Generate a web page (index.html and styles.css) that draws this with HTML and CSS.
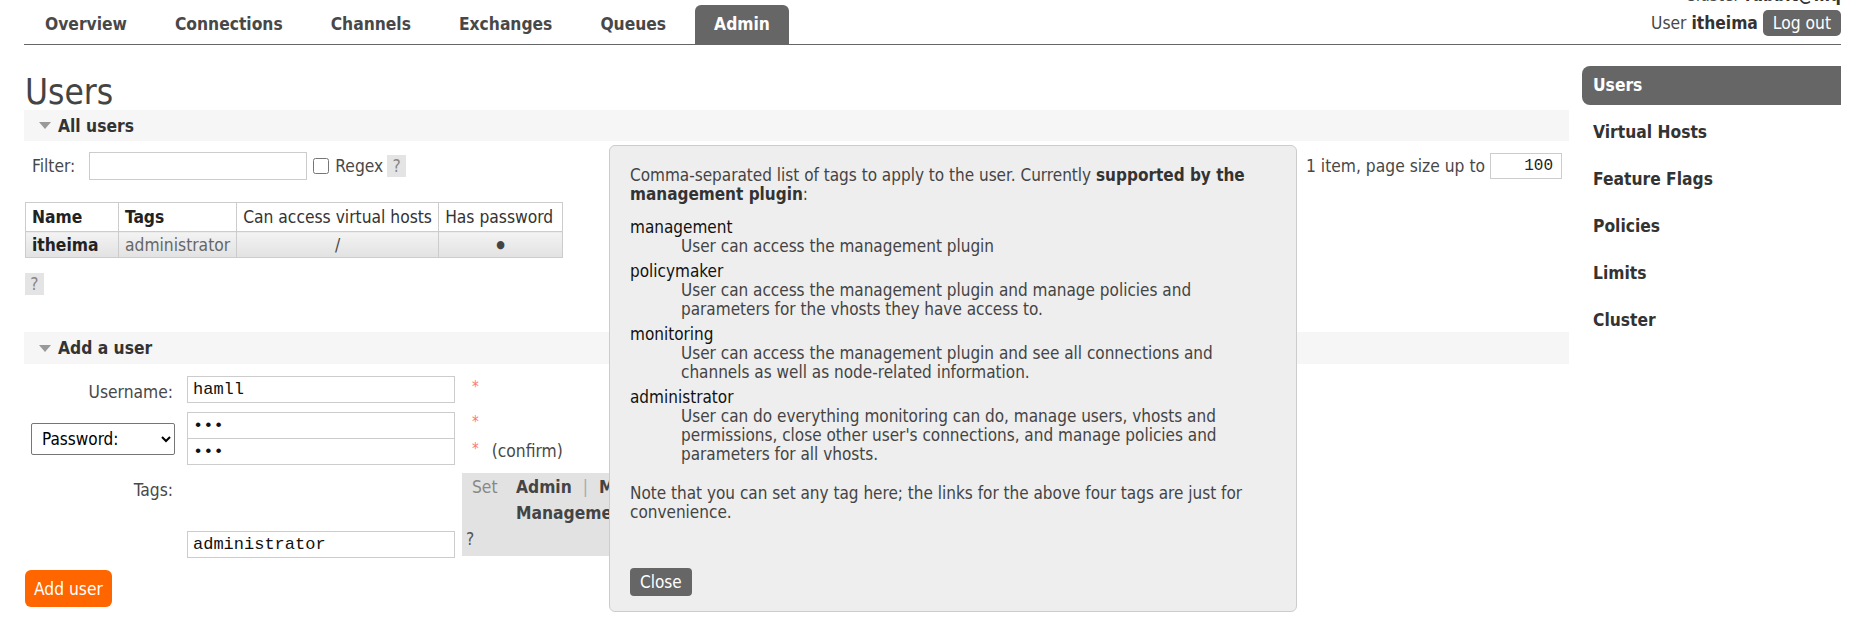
FILE: index.html
```html
<!DOCTYPE html>
<html lang="en">
<head>
<meta charset="utf-8">
<title>RabbitMQ Management - Users</title>
<link rel="stylesheet" href="styles.css">
</head>
<body>
<div class="page">
  <header class="topbar">
    <ul class="menu">
      <li><a href="#">Overview</a></li>
      <li><a href="#">Connections</a></li>
      <li><a href="#">Channels</a></li>
      <li><a href="#">Exchanges</a></li>
      <li><a href="#">Queues</a></li>
      <li><a href="#" class="active">Admin</a></li>
    </ul>
    <div class="login">
      <div class="cluster">Cluster <b>rabbit@mq</b></div>
      <div class="user">User <b>itheima</b> <button class="logout">Log out</button></div>
    </div>
  </header>

  <div class="content">
    <main class="main">
      <h1>Users</h1>
      <div class="section-head"><span class="tri"></span><span>All users</span></div>

      <div class="filter-row">
        <label class="filter-label">Filter:</label>
        <input class="filter-input" type="text">
        <input class="regex-box" type="checkbox">
        <span class="regex-label">Regex</span>
        <span class="help">?</span>
        <span class="paging">1 item, page size up to</span>
        <input class="page-size" type="text" value="100">
      </div>

      <table class="list">
        <thead>
          <tr>
            <th class="c-name b">Name</th>
            <th class="c-tags b">Tags</th>
            <th class="c-vh">Can access virtual hosts</th>
            <th class="c-pw">Has password</th>
          </tr>
        </thead>
        <tbody>
          <tr>
            <td class="b dark">itheima</td>
            <td class="grey">administrator</td>
            <td class="center">/</td>
            <td class="center dot">&#9679;</td>
          </tr>
        </tbody>
      </table>

      <div class="help-row"><span class="help">?</span></div>

      <div class="section-head add-head"><span class="tri"></span><span>Add a user</span></div>

      <div class="form">
        <label class="lbl">Username:</label>
        <div class="field"><input class="txt" type="text" value="hamll"></div>
        <div class="extra"><span class="req">*</span></div>

        <div class="lbl sel-cell">
          <select class="pwsel"><option>Password:</option></select>
        </div>
        <div class="field stack">
          <input class="txt" type="password" value="abc">
          <input class="txt" type="password" value="abc">
        </div>
        <div class="extra stack">
          <div class="line"><span class="req">*</span></div>
          <div class="line"><span class="req">*</span><span class="confirm">(confirm)</span></div>
        </div>

        <label class="lbl tags-lbl">Tags:</label>
        <div class="field bottom"><input class="txt" type="text" value="administrator"></div>
        <div class="extra">
          <div class="tagbox">
            <div class="tagline"><span class="set">Set</span><span class="links"><b>Admin</b> <i>|</i> <b>Monitoring</b> <i>|</i> <b>Policymaker</b> <i>|</i></span></div>
            <div class="tagline"><span class="set"></span><span class="links"><b>Management</b> <i>|</i> <b>Impersonator</b> <i>|</i> <b>None</b></span></div>
            <div class="tagq">?</div>
          </div>
        </div>
      </div>

      <button class="add-btn">Add user</button>
    </main>

    <ul class="side">
      <li class="active">Users</li>
      <li>Virtual Hosts</li>
      <li>Feature Flags</li>
      <li>Policies</li>
      <li>Limits</li>
      <li>Cluster</li>
    </ul>
  </div>

  <div class="popup">
    <p>Comma-separated list of tags to apply to the user. Currently <b>supported by the management plugin</b>:</p>
    <dl>
      <dt>management</dt>
      <dd>User can access the management plugin</dd>
      <dt>policymaker</dt>
      <dd>User can access the management plugin and manage policies and parameters for the vhosts they have access to.</dd>
      <dt>monitoring</dt>
      <dd>User can access the management plugin and see all connections and channels as well as node-related information.</dd>
      <dt>administrator</dt>
      <dd>User can do everything monitoring can do, manage users, vhosts and permissions, close other user's connections, and manage policies and parameters for all vhosts.</dd>
    </dl>
    <p>Note that you can set any tag here; the links for the above four tags are just for convenience.</p>
    <button class="close">Close</button>
  </div>
</div>
</body>
</html>
```

FILE: styles.css
```css
* { box-sizing: border-box; }
html, body { margin: 0; padding: 0; }
body {
  font-family: "DejaVu Sans", Verdana, sans-serif;
  font-stretch: condensed;
  font-size: 17.3px;
  color: #484848;
  background: #fff;
  overflow: hidden;
}
.page { position: relative; width: 1866px; height: 626px; overflow: hidden; }

/* top bar */
.topbar {
  display: flex;
  justify-content: space-between;
  align-items: flex-end;
  margin: -10px 25px 0 24px;
  border-bottom: 1px solid #666;
}
.menu { display: flex; list-style: none; margin: 0; padding: 0 0 0 2px; }
.menu li { margin-right: 10px; }
.menu a {
  display: block;
  padding: 10px 19px;
  line-height: 19px;
  font-size: 17.3px;
  font-weight: bold;
  color: #484848;
  text-decoration: none;
  border-radius: 6px 6px 0 0;
}
.menu a.active { background: #666; color: #fff; }
.login { text-align: right; padding-bottom: 8px; }
.cluster { line-height: 10px; height: 20px; }
.cluster b { color: #333; }
.user { display: flex; align-items: center; justify-content: flex-end; gap: 5px; height: 26px; }
.user b { color: #333; }
.logout {
  font: inherit;
  font-stretch: condensed;
  background: #666;
  color: #fff;
  border: 0;
  border-radius: 5px;
  height: 26px;
  padding: 0 10px;
  line-height: 26px;
}

/* layout */
.content { display: flex; gap: 13px; margin: 0 25px 0 24px; }
.main { flex: 1; min-width: 0; }

h1 {
  margin: 30px 0 0 1px;
  font-size: 35px;
  line-height: 35px;
  font-weight: normal;
  color: #444;
}
.section-head {
  display: flex;
  align-items: center;
  height: 31px;
  background: #f6f6f6;
  font-weight: bold;
  color: #333;
}
.tri {
  width: 0; height: 0;
  margin: 0 7px 0 15px;
  border-left: 6px solid transparent;
  border-right: 6px solid transparent;
  border-top: 7px solid #999;
}

.filter-row { display: flex; align-items: center; height: 28px; margin-top: 11px; }
.filter-label { margin-left: 8px; }
.filter-input { width: 218px; height: 28px; margin-left: 14px; border: 1px solid #ccc; }
.regex-box { width: 16px; height: 16px; margin: 0 0 0 6px; }
.regex-label { margin-left: 6px; }
.help {
  display: inline-block;
  width: 19px; height: 22px;
  line-height: 22px;
  text-align: center;
  background: #e4e4e4;
  color: #888;
}
.filter-row .help { margin-left: 4px; }
.paging { margin-left: auto; }
.page-size {
  width: 72px; height: 26px;
  margin: 0 7px 0 5px;
  border: 1px solid #ccc;
  text-align: right;
  padding-right: 8px;
  font-family: "Liberation Mono", monospace;
  font-size: 16px;
  color: #222;
}

table.list { border-collapse: collapse; margin: 22px 0 0 1px; }
table.list th, table.list td {
  border: 1px solid #ccc;
  padding: 0 6px;
  text-align: left;
  white-space: nowrap;
}
table.list th { height: 29px; font-weight: normal; color: #333; background: #fff; }
table.list td { height: 26px; background: linear-gradient(#f3f3f3, #e2e2e2); }
.c-name { width: 93px; }
.c-tags { width: 118px; }
.c-vh { width: 202px; }
.c-pw { width: 124px; }
table.list .b { font-weight: bold; color: #222; }
.grey { color: #666; }
.center { text-align: center !important; }
.dot { font-size: 11px; color: #444; }

.help-row { margin: 15px 0 0 1px; height: 22px; }
.add-head { margin-top: 37px; height: 32px; }

/* form */
.form {
  display: grid;
  grid-template-columns: 151px 268px 1fr;
  column-gap: 12px;
  row-gap: 9px;
  margin-top: 12px;
}
.form .extra { margin-left: -5px; }
.lbl { text-align: right; padding: 5px 2px 0 0; height: 27px; line-height: 22px; }
.sel-cell { display: flex; align-items: center; justify-content: flex-end; padding: 0; height: auto; }
.pwsel {
  width: 144px; height: 32px;
  font-family: "DejaVu Sans", sans-serif;
  font-stretch: condensed;
  font-size: 17px;
  color: #000;
  border: 1px solid #767676;
  border-radius: 2px;
  background: #fff;
  padding-left: 6px;
}
.field { display: flex; flex-direction: column; }
.field.bottom { justify-content: flex-end; }
.txt {
  width: 268px; height: 27px;
  border: 1px solid #ccc;
  padding: 0 5px;
  font-family: "Liberation Mono", monospace;
  font-size: 17px;
  color: #111;
}
.stack .txt + .txt { margin-top: -1px; }
.extra .line { height: 27px; display: flex; align-items: flex-start; }
.req { color: #f77; font-size: 15px; margin-left: 10px; line-height: 20px; }
.confirm { margin-left: 13px; line-height: 24px; }
.tags-lbl { padding-top: 2px; line-height: 26px; }
.tagbox {
  display: inline-block;
  background: #e2e2e2;
  padding: 1px 16px 0 0;
  height: 83px;
  margin-top: -2px;
  line-height: 26px;
}
.tagline { display: flex; white-space: nowrap; }
.set { width: 54px; padding-left: 10px; color: #888; }
.links b { color: #444; }
.links i { font-style: normal; color: #aaa; margin: 0 6px; }
.tagq { padding-left: 4px; line-height: 27px; color: #555; }
.field.bottom .txt { margin-bottom: -2px; }

.add-btn {
  margin: 14px 0 0 1px;
  height: 37px;
  padding: 0 9px;
  background: #ff6600;
  color: #fff;
  border: 0;
  border-radius: 6px;
  font-family: inherit;
  font-stretch: condensed;
  font-size: 17.3px;
}

/* sidebar */
.side { width: 259px; list-style: none; margin: 21px 0 0; padding: 0; }
.side li {
  height: 39px;
  line-height: 39px;
  margin-bottom: 8px;
  padding-left: 11px;
  font-weight: bold;
  color: #333;
}
.side li.active { background: #666; color: #fff; border-radius: 8px 0 0 8px; }

/* help popup */
.popup {
  position: absolute;
  left: 609px;
  top: 145px;
  width: 688px;
  height: 467px;
  display: flex;
  flex-direction: column;
  align-items: flex-start;
  background: #eee;
  border: 1px solid #ccc;
  border-radius: 6px;
  padding: 20px 20px 15px;
  font-size: 17px;
  line-height: 19px;
  color: #444;
}
.popup p { margin: 0 0 14px; }
.popup b { color: #333; }
.popup dl { margin: 0 0 14px; }
.popup dt { color: #111; }
.popup dd { margin: 0 0 6px 51px; }
.close {
  margin-top: auto;
  height: 28px;
  padding: 0 10px;
  background: #666;
  color: #fff;
  border: 0;
  border-radius: 4px;
  font-family: inherit;
  font-stretch: condensed;
  font-size: 17px;
}
```
